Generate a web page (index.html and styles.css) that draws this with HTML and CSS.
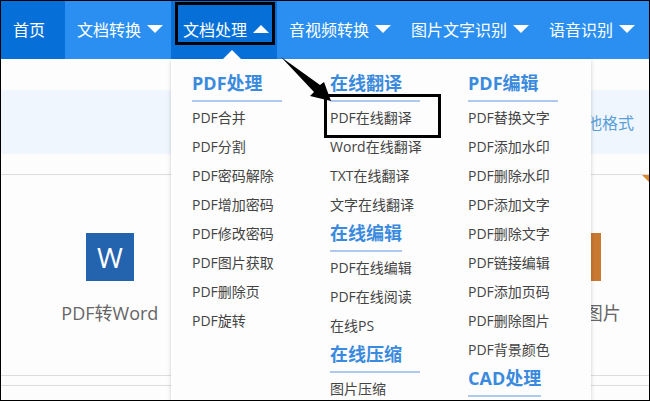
FILE: index.html
```html
<!DOCTYPE html>
<html lang="zh-CN">
<head>
  <meta charset="UTF-8">
  <title>PDF转换</title>
  <link rel="stylesheet" href="styles.css">
</head>
<body>
  <!-- Top navigation -->
  <nav class="nav">
    <a class="nav-item home active" href="#">首页</a>
    <a class="nav-item" href="#">文档转换<span class="caret"></span></a>
    <div class="nav-group">
      <a class="nav-item active open" href="#">文档处理<span class="caret up"></span></a>
      <span class="mark mark-nav"></span>

      <!-- Dropdown -->
      <div class="menu">
        <div class="menu-col">
          <h3 class="wide">PDF处理</h3>
          <ul>
            <li><a href="#">PDF合并</a></li>
            <li><a href="#">PDF分割</a></li>
            <li><a href="#">PDF密码解除</a></li>
            <li><a href="#">PDF增加密码</a></li>
            <li><a href="#">PDF修改密码</a></li>
            <li><a href="#">PDF图片获取</a></li>
            <li><a href="#">PDF删除页</a></li>
            <li><a href="#">PDF旋转</a></li>
          </ul>
        </div>
        <div class="menu-col">
          <h3 class="wide">在线翻译</h3>
          <ul>
            <li class="marked"><a href="#">PDF在线翻译</a><span class="mark mark-link"></span></li>
            <li><a href="#">Word在线翻译</a></li>
            <li><a href="#">TXT在线翻译</a></li>
            <li><a href="#">文字在线翻译</a></li>
          </ul>
          <h3>在线编辑</h3>
          <ul>
            <li><a href="#">PDF在线编辑</a></li>
            <li><a href="#">PDF在线阅读</a></li>
            <li><a href="#">在线PS</a></li>
          </ul>
          <h3 class="wide">在线压缩</h3>
          <ul>
            <li><a href="#">图片压缩</a></li>
          </ul>
        </div>
        <div class="menu-col">
          <h3 class="wide">PDF编辑</h3>
          <ul>
            <li><a href="#">PDF替换文字</a></li>
            <li><a href="#">PDF添加水印</a></li>
            <li><a href="#">PDF删除水印</a></li>
            <li><a href="#">PDF添加文字</a></li>
            <li><a href="#">PDF删除文字</a></li>
            <li><a href="#">PDF链接编辑</a></li>
            <li><a href="#">PDF添加页码</a></li>
            <li><a href="#">PDF删除图片</a></li>
            <li><a href="#">PDF背景颜色</a></li>
          </ul>
          <h3>CAD处理</h3>
        </div>
      </div>

      <svg class="arrow" width="54" height="48" viewBox="0 0 54 48" aria-hidden="true">
        <path d="M0 0 L39 28 L43 25 L50 44 L29 39 L33 35 Z"/>
      </svg>
    </div>
    <a class="nav-item" href="#">音视频转换<span class="caret"></span></a>
    <a class="nav-item" href="#">图片文字识别<span class="caret"></span></a>
    <a class="nav-item" href="#">语音识别<span class="caret"></span></a>
  </nav>

  <main>
    <div class="banner"><a href="#">其他格式</a></div>

    <!-- Converter cards -->
    <div class="cards">
      <a class="card" href="#">
        <span class="card-icon word">W</span>
        <span>PDF转Word</span>
      </a>
      <span class="card"></span>
      <a class="card hot" href="#">
        <span class="card-icon image"></span>
        <span>PDF转图片</span>
      </a>
    </div>
    <div class="next-row"></div>
  </main>
</body>
</html>
```
FILE: styles.css
```css
* { box-sizing: border-box; }
body { display: flex; flex-direction: column; margin: 0; height: 100vh; overflow: hidden; border: 1px solid #000; background: #fdfdfd; font-family: "Open Sans", "Noto Sans CJK SC", sans-serif; }
a { color: inherit; text-decoration: none; }
h3, ul { margin: 0; padding: 0; }
ul { list-style: none; }
main { flex: 1; min-height: 0; padding-top: 31px; overflow: hidden; }

.nav { display: flex; flex: none; height: 58px; background: #2a8ff0; color: #fff; font-size: 16px; white-space: nowrap; }
.nav-item { display: flex; align-items: center; gap: 6px; height: 58px; padding: 0 8px 2px 12px; }
.nav-item.active { background: #0670d8; }
.nav-item.home { padding-right: 20px; }
.nav-group { position: relative; }
.open::after { content: ""; position: absolute; left: 52px; top: 49px; border: 9px solid transparent; border-top: 0; border-bottom-color: #fff; }

.caret { border: 8px solid transparent; border-bottom: 0; border-top-color: #fff; }
.caret.up { border-top: 0; border-bottom: 8px solid #fff; }

.menu { position: absolute; z-index: 1; top: 58px; left: 0; display: grid; grid-template-columns: repeat(3, 138px); width: 420px; height: calc(100vh - 60px); padding: 10px 0 0 21px; background: #fdfdfd; box-shadow: 0 2px 4px rgba(0,0,0,0.2); overflow: hidden; }
.menu h3 { width: fit-content; margin-bottom: 1px; padding-bottom: 2px; border-bottom: 2px solid #adc9ee; color: #3a8ade; font-size: 18px; line-height: 29px; }
.menu h3.wide { min-width: 90px; }
.menu li { color: #444; font-size: 14px; line-height: 29px; }
.marked { position: relative; }

/* Hand-drawn callouts */
.mark { position: absolute; z-index: 2; border: 3px solid #000; pointer-events: none; }
.mark-nav { inset: 1px 2px auto 4px; height: 43px; }
.mark-link { top: -9px; left: -6px; width: 117px; height: 44px; }
.arrow { position: absolute; z-index: 3; top: 56px; left: 110px; }

.banner { display: flex; align-items: center; justify-content: flex-end; height: 64px; padding-right: 15px; background: #eff6fe; color: #5a9fd6; font-size: 16px; }

.cards { display: grid; grid-template-columns: repeat(3, 1fr); margin: 20px -45px 0 -8px; border: 1px solid #ddd; border-width: 1px 0; }
.card { position: relative; display: flex; flex-direction: column; align-items: center; gap: 18px; height: 200px; padding-top: 58px; color: #666; font-size: 18px; line-height: 28px; }
.card-icon { display: flex; align-items: center; justify-content: center; width: 48px; height: 48px; color: #fff; font-size: 28px; }
.word { background: #2463ae; }
.image { background: #c97830; }
.hot::after { content: ""; position: absolute; top: 0; right: 0; border: 26px solid #d88a2c; border-left-color: transparent; border-bottom-color: transparent; }
.next-row { height: 10px; border-bottom: 1px solid #ddd; }
```
